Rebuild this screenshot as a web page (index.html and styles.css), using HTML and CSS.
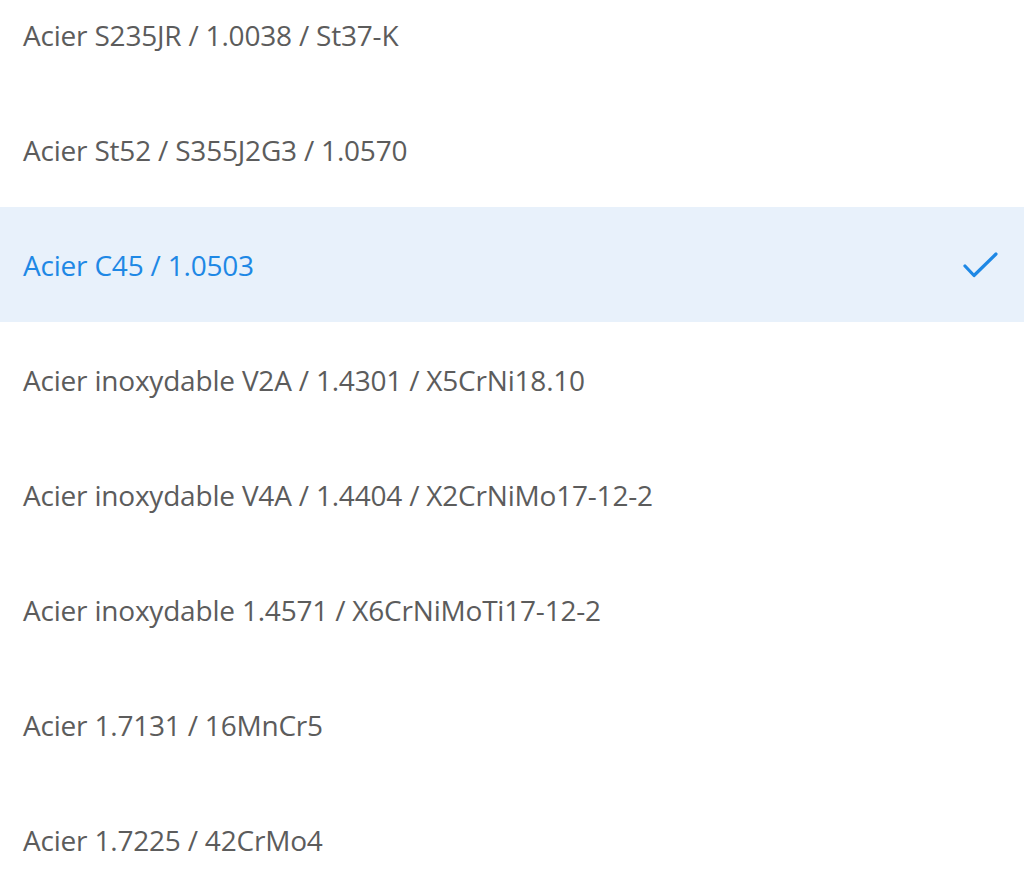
FILE: index.html
```html
<!DOCTYPE html>
<html lang="fr">
<head>
    <meta charset="UTF-8">
    <meta name="viewport" content="width=device-width, initial-scale=1.0">
    <title>Matériau</title>
    <link rel="stylesheet" href="styles.css">
</head>
<body>
    <ul class="option-list">
        <li class="option">Acier S235JR / 1.0038 / St37-K</li>
        <li class="option">Acier St52 / S355J2G3 / 1.0570</li>
        <li class="option option--selected">
            <span>Acier C45 / 1.0503</span>
            <svg class="check" width="36" height="28" viewBox="0 0 36 28">
                <polyline points="2,15 11,24.5 33,3" fill="none" stroke="currentColor" stroke-width="3.2" stroke-linecap="round" stroke-linejoin="round"/>
            </svg>
        </li>
        <li class="option">Acier inoxydable V2A / 1.4301 / X5CrNi18.10</li>
        <li class="option">Acier inoxydable V4A / 1.4404 / X2CrNiMo17-12-2</li>
        <li class="option">Acier inoxydable 1.4571 / X6CrNiMoTi17-12-2</li>
        <li class="option">Acier 1.7131 / 16MnCr5</li>
        <li class="option">Acier 1.7225 / 42CrMo4</li>
    </ul>
</body>
</html>
```

FILE: styles.css
```css
:root {
    --text: #5c5c5c;
    --accent: #1e88e5;
    --selected-bg: #e8f1fb;
}

body {
    margin: 0;
    background: #fff;
    font-family: "Open Sans", sans-serif;
    overflow: hidden;
}

.option-list {
    list-style: none;
    margin: -23px 0 0;
    padding: 0;
}

.option {
    height: 115px;
    display: flex;
    align-items: center;
    justify-content: space-between;
    padding: 0 25px 0 23px;
    font-size: 28px;
    letter-spacing: -0.2px;
    color: var(--text);
    box-sizing: border-box;
}

.option--selected {
    background: var(--selected-bg);
    color: var(--accent);
}

.check {
    display: block;
}
```
